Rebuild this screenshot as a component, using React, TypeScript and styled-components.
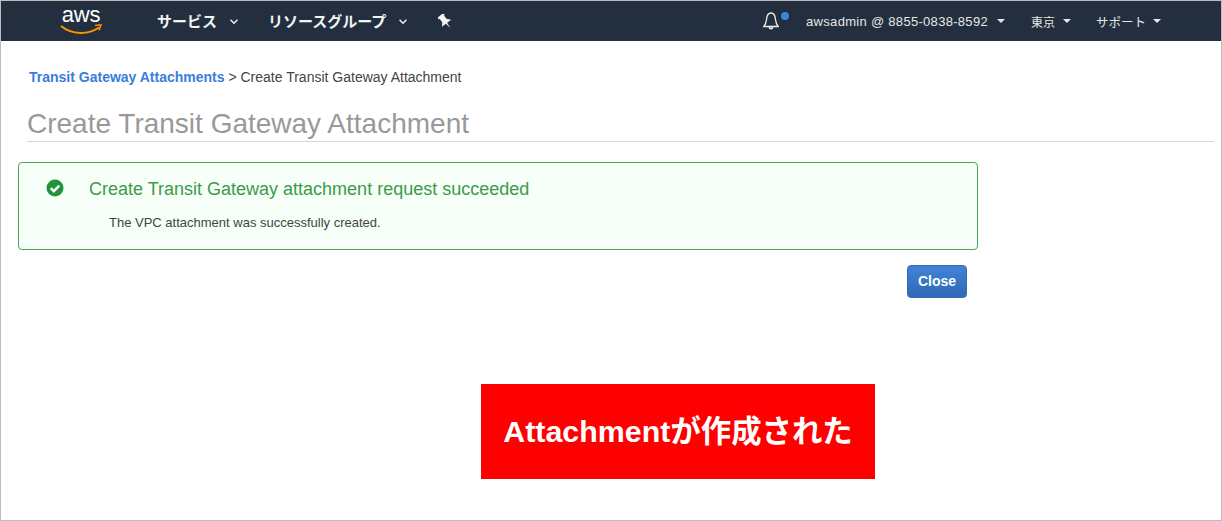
import styled, { createGlobalStyle } from "styled-components";

const GlobalStyle = createGlobalStyle`
  html, body {
    margin: 0;
    padding: 0;
    background: #fff;
  }
  * {
    box-sizing: border-box;
  }
`;

const Frame = styled.div`
  position: relative;
  width: 1222px;
  height: 521px;
  border: 1px solid #bdbdbd;
  overflow: hidden;
  font-family: "Liberation Sans", "Noto Sans CJK JP", sans-serif;
`;

const NavBar = styled.header`
  display: flex;
  align-items: center;
  height: 40px;
  background: #232f3e;
  color: #fff;
  padding: 0 60px 0 59px;
`;

const Logo = styled.div`
  display: flex;
  flex-direction: column;
  align-items: center;
  width: 42px;
  margin-right: 55px;
  margin-top: -2px;
`;

const LogoText = styled.span`
  font-size: 22px;
  line-height: 18px;
  color: #fff;
  letter-spacing: -0.2px;
`;

const MainLink = styled.span`
  display: flex;
  align-items: center;
  padding-bottom: 2px;
  font-family: "Noto Sans CJK JP", sans-serif;
  font-size: 15px;
  font-weight: 700;
  color: #f4f4f4;
  margin-right: 30px;
  white-space: nowrap;
`;

const Chevron = styled.svg`
  margin-left: 13px;
  margin-top: 3px;
`;

const PinIcon = styled.svg`
  margin-left: 1px;
`;

const Spacer = styled.div`
  flex: 1;
`;

const BellWrap = styled.span`
  position: relative;
  display: flex;
  width: 16px;
  margin-right: 27px;
`;

const BellDot = styled.span`
  position: absolute;
  top: 0;
  right: -10px;
  width: 8px;
  height: 8px;
  border-radius: 50%;
  background: #3f83e0;
`;

const UtilLink = styled.span<{ $gap: number; $size: number; $caretGap: number }>`
  display: flex;
  align-items: center;
  font-family: "Liberation Sans", "Noto Sans CJK JP", sans-serif;
  font-size: ${(props) => props.$size}px;
  letter-spacing: ${(props) => (props.$size > 12.5 ? "0.3px" : "0")};
  color: #e6e6e6;
  margin-right: ${(props) => props.$gap}px;
  white-space: nowrap;

  &::after {
    content: "";
    width: 0;
    height: 0;
    margin-left: ${(props) => props.$caretGap}px;
    border-left: 4px solid transparent;
    border-right: 4px solid transparent;
    border-top: 4px solid #e6e6e6;
  }
`;

const Main = styled.main`
  padding: 28px 7px 0 17px;
`;

const Breadcrumb = styled.div`
  padding-left: 11px;
  font-size: 14px;
  line-height: 16px;
  color: #444;
`;

const CrumbLink = styled.a`
  color: #3b7ddd;
  font-weight: 700;
`;

const PageTitle = styled.h1`
  margin: 19px 0 0 9px;
  padding-top: 3px;
  height: 38px;
  border-bottom: 1px solid #d5d5d5;
  font-size: 28px;
  line-height: 34px;
  font-weight: 400;
  color: #999;
`;

const Alert = styled.section`
  display: flex;
  width: 960px;
  height: 88px;
  margin-top: 20px;
  padding: 16px 0 0 27px;
  background: #f6fff8;
  border: 1px solid #45a857;
  border-radius: 4px;
`;

const AlertIcon = styled.svg`
  flex: none;
`;

const AlertBody = styled.div`
  margin-left: 25px;
`;

const AlertTitle = styled.div`
  font-size: 18px;
  line-height: 20px;
  color: #3c9a4a;
`;

const AlertText = styled.div`
  margin: 16px 0 0 20px;
  font-size: 13px;
  line-height: 16px;
  color: #444;
`;

const Actions = styled.div`
  display: flex;
  justify-content: flex-end;
  width: 949px;
  margin-top: 15px;
`;

const PrimaryButton = styled.button`
  width: 60px;
  height: 33px;
  padding: 0 0 2px;
  border: 1px solid #2f6bb8;
  border-radius: 4px;
  background: linear-gradient(#4282d6, #2f69b8);
  color: #fff;
  font-family: inherit;
  font-size: 14px;
  font-weight: 700;
`;

const Callout = styled.div`
  position: absolute;
  left: 480px;
  top: 383px;
  display: flex;
  align-items: center;
  justify-content: center;
  width: 394px;
  height: 95px;
  padding-bottom: 5px;
  background: #ff0000;
  color: #fff;
  font-family: "Liberation Sans", "Noto Sans CJK JP", sans-serif;
  font-size: 30.4px;
  font-weight: 700;
  white-space: nowrap;
`;

const ChevronIcon = () => (
  <Chevron width="8" height="5" viewBox="0 0 8 5" fill="none">
    <path d="M.5.700L4 4.200 7.500.700" stroke="#e8e8e8" strokeWidth="1.600" />
  </Chevron>
);

function App() {
  return (
    <>
      <GlobalStyle />
      <Frame>
        <NavBar>
          <Logo>
            <LogoText>aws</LogoText>
            <svg width="42" height="11" viewBox="0 0 42 11" fill="none">
              <path d="M1 2c11 9 27 9 38 1.500" stroke="#f79400" strokeWidth="2" />
              <path d="M35 1.500l6-.7-2 5.500" stroke="#f79400" strokeWidth="1.500" />
            </svg>
          </Logo>
          <MainLink>
            サービス
            <ChevronIcon />
          </MainLink>
          <MainLink>
            リソースグループ
            <ChevronIcon />
          </MainLink>
          <PinIcon width="15" height="15" viewBox="0 0 15 15" fill="#f6f6f6">
            <path
              transform="rotate(-38 7.500 7.500)"
              d="M3.500 -.5h7.500v2.300H10V6l3 3.500H1.500L4.500 6V1.800h-1zM6.500 9.500h1.500l-.7 6z"
            />
          </PinIcon>
          <Spacer />
          <BellWrap>
            <svg width="16" height="18" viewBox="0 0 16 18" fill="none" stroke="#f0f0f0" strokeWidth="1.300">
              <path d="M.8 14.500h14.400c-1.900-2-2.400-4-2.700-7C12.200 4 11 1 8 1S3.800 4 3.500 7.500c-.3 3-.8 5-2.700 7z" />
              <path d="M6 15.500c.5 1.700 3.500 1.700 4 0" fill="#f0f0f0" />
            </svg>
            <BellDot />
          </BellWrap>
          <UtilLink $gap={26} $size={13} $caretGap={9}>
            awsadmin @ 8855-0838-8592
          </UtilLink>
          <UtilLink $gap={25} $size={12} $caretGap={8}>
            東京
          </UtilLink>
          <UtilLink $gap={0} $size={12.5} $caretGap={7}>
            サポート
          </UtilLink>
        </NavBar>
        <Main>
          <Breadcrumb>
            <CrumbLink>Transit Gateway Attachments</CrumbLink> &gt; Create Transit Gateway Attachment
          </Breadcrumb>
          <PageTitle>Create Transit Gateway Attachment</PageTitle>
          <Alert>
            <AlertIcon width="18" height="18" viewBox="0 0 18 18">
              <circle cx="9" cy="9" r="8.500" fill="#23933a" />
              <path d="M4.800 9.200l3 3 5.500-5.500" fill="none" stroke="#fff" strokeWidth="2.400" />
            </AlertIcon>
            <AlertBody>
              <AlertTitle>Create Transit Gateway attachment request succeeded</AlertTitle>
              <AlertText>The VPC attachment was successfully created.</AlertText>
            </AlertBody>
          </Alert>
          <Actions>
            <PrimaryButton>Close</PrimaryButton>
          </Actions>
        </Main>
        <Callout>Attachmentが作成された</Callout>
      </Frame>
    </>
  );
}

export default App;
